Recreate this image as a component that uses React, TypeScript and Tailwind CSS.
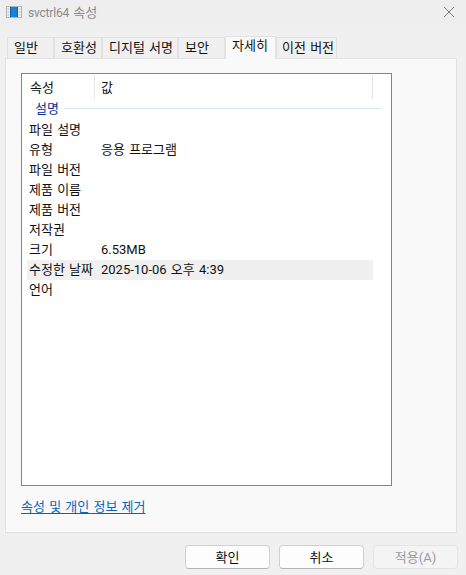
const rows: [string, string][] = [
  ["파일 설명", ""],
  ["유형", "응용 프로그램"],
  ["파일 버전", ""],
  ["제품 이름", ""],
  ["제품 버전", ""],
  ["저작권", ""],
  ["크기", "6.53MB"],
  ["수정한 날짜", "2025-10-06 오후 4:39"],
  ["언어", ""],
];

const tabs = [
  { label: "일반", w: "w-[47px]" },
  { label: "호환성", w: "w-[48px]" },
  { label: "디지털 서명", w: "w-[76px]" },
  { label: "보안", w: "w-[47px]" },
];

function AppIcon() {
  return (
    <svg width="16" height="12" viewBox="0 0 16 12">
      <rect x="0.5" y="0.5" width="15" height="11" fill="#f2f2f2" stroke="#b4b4b4" />
      <rect x="4" y="1" width="8" height="10" fill="#1b82dc" />
      <rect x="4" y="1" width="1" height="10" fill="#0f5fb0" />
      <rect x="11" y="1" width="1" height="10" fill="#0f5fb0" />
      <path d="M1.5 3h1.5M1.5 6h1.5M1.5 9h1.5M13 3h1.5M13 6h1.5M13 9h1.5" stroke="#b0b0b0" />
    </svg>
  );
}

export default function App() {
  return (
    <div className="w-[466px] h-[575px] bg-[#f0f0f0] flex flex-col text-[13px] text-[#111111] [word-spacing:1px] font-['Roboto','Noto_Sans_CJK_KR',sans-serif] overflow-hidden">
      <div className="h-[24px] flex items-center justify-between pl-[6px] pr-[10px] bg-[#eeeeee] shrink-0">
        <div className="flex items-center gap-[6px]">
          <AppIcon />
          <span className="text-[#8a8a8a] leading-none">
            <span className="text-[12px] tracking-[-0.2px]">svctrl64</span> 속성
          </span>
        </div>
        <svg width="12" height="12" viewBox="0 0 12 12" className="mr-[1px]">
          <path d="M1 1l10 10M11 1L1 11" stroke="#7a7a7a" strokeWidth="1" fill="none" />
        </svg>
      </div>

      <div className="h-[34px] flex items-end pl-[7px] shrink-0">
        {tabs.map((t) => (
          <div
            key={t.label}
            className={`${t.w} h-[21px] pb-[2px] pl-[6px] border border-b-0 border-[#e2e2e2] flex items-center whitespace-nowrap leading-none bg-[#f0f0f0]`}
          >
            {t.label}
          </div>
        ))}
        <div className="w-[51px] h-[23px] -mb-px z-10 pl-[6px] border border-b-0 border-[#e2e2e2] bg-[#f9f9f9] flex items-start pt-[1px] leading-[16px]">
          자세히
        </div>
        <div className="w-[61px] h-[21px] pb-[2px] pl-[5px] border border-b-0 border-[#e2e2e2] flex items-center whitespace-nowrap leading-none">
          이전 버전
        </div>
      </div>

      <div className="ml-[5px] w-[452px] h-[475px] border border-[#e2e2e2] bg-[#f9f9f9] pl-[15px] pt-[14px] shrink-0 flex flex-col">
        <div className="w-[371px] h-[413px] border border-[#83838f] bg-white pl-[5px] pt-[1px] flex flex-col">
          <div className="h-[24px] flex items-center shrink-0">
            <div className="w-[68px] h-full border-r border-[#e5e5e5] pl-[3px] flex items-center leading-none">속성</div>
            <div className="w-[278px] h-full border-r border-[#e5e5e5] pl-[6px] flex items-center leading-none">값</div>
          </div>
          <div className="h-[19px] mb-[2px] flex items-center pl-[8px] gap-[5px] w-[354px] shrink-0">
            <span className="text-[#003399] leading-none">설명</span>
            <div className="flex-1 h-px bg-[#d9e4f2]" />
          </div>
          {rows.map(([name, value], i) => (
            <div key={name} className={`h-[20px] pb-[2px] w-[346px] flex items-center leading-none shrink-0 ${i === 7 ? "bg-[#f0f0f0]" : ""}`}>
              <span className="w-[74px] pl-[2px] shrink-0 whitespace-nowrap">{name}</span>
              <span className="whitespace-nowrap">{value}</span>
            </div>
          ))}
        </div>
        <div className="mt-[11px]">
          <a className="text-[#0067c0] underline underline-offset-2 leading-[18px]">속성 및 개인 정보 제거</a>
        </div>
      </div>

      <div className="flex justify-end gap-[9px] pr-[8px] pt-[12px]">
        <button className="w-[85px] h-[24px] rounded-[4px] border border-[#d0d0d0] border-b-[#b5b5b5] bg-[#fdfdfd] leading-none">확인</button>
        <button className="w-[85px] h-[24px] rounded-[4px] border border-[#d0d0d0] border-b-[#b5b5b5] bg-[#fdfdfd] leading-none">취소</button>
        <button className="w-[85px] h-[24px] rounded-[4px] border border-[#e4e4e4] bg-[#f4f4f4] text-[#9a9a9a] leading-none">적용(A)</button>
      </div>
    </div>
  );
}
